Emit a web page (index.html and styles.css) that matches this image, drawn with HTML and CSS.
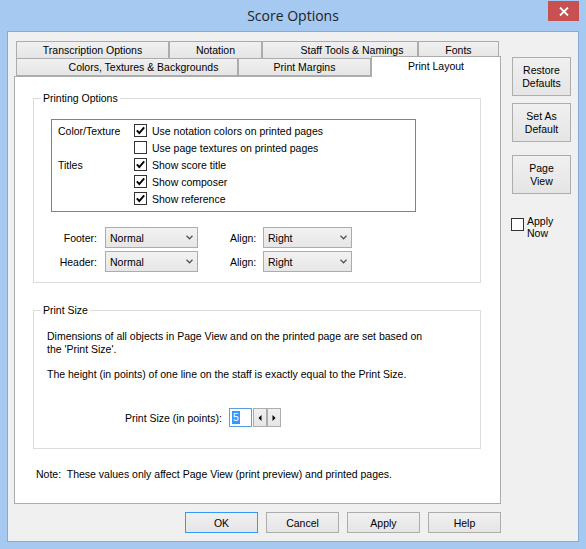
FILE: index.html
```html
<!DOCTYPE html>
<html lang="en">

<head>
    <meta charset="UTF-8">
    <title>Score Options</title>
    <link rel="stylesheet" href="styles.css">
</head>

<body>
    <div class="window">
        <div class="titlebar">
            <div class="title">Score Options</div>
            <div class="close">
                <svg width="10" height="9" viewBox="0 0 10 9">
                    <path d="M1 0.5 L9 8.5 M9 0.5 L1 8.5" stroke="#fff" stroke-width="1.8" fill="none" />
                </svg>
            </div>
        </div>

        <div class="client">
            <div class="main">
                <div class="tabs">
                    <div class="tab-row back">
                        <div class="tab" style="width:153px">Transcription Options</div>
                        <div class="tab" style="width:93px">Notation</div>
                        <div class="tab tab-shift" style="width:156px">Staff Tools &amp; Namings</div>
                        <div class="tab" style="width:81px">Fonts</div>
                    </div>
                    <div class="tab-row front">
                        <div class="tab tab-shift-wide" style="width:222px">Colors, Textures &amp; Backgrounds</div>
                        <div class="tab" style="width:133px">Print Margins</div>
                        <div class="tab selected" style="width:130px">Print Layout</div>
                    </div>
                </div>

                <div class="panel">
                    <fieldset class="group">
                        <legend>Printing Options</legend>
                        <div class="choices">
                            <div class="choice-label">Color/Texture</div>
                            <div class="check"><span class="box checked"><svg width="11" height="11" viewBox="0 0 11 11"><path d="M1.8 5.4 L4.3 8 L9.2 2.3" stroke="#000" stroke-width="1.9" fill="none" /></svg></span>Use notation colors on printed pages</div>
                            <div class="check col2"><span class="box"></span>Use page textures on printed pages</div>
                            <div class="choice-label">Titles</div>
                            <div class="check"><span class="box checked"><svg width="11" height="11" viewBox="0 0 11 11"><path d="M1.8 5.4 L4.3 8 L9.2 2.3" stroke="#000" stroke-width="1.9" fill="none" /></svg></span>Show score title</div>
                            <div class="check col2"><span class="box checked"><svg width="11" height="11" viewBox="0 0 11 11"><path d="M1.8 5.4 L4.3 8 L9.2 2.3" stroke="#000" stroke-width="1.9" fill="none" /></svg></span>Show composer</div>
                            <div class="check col2"><span class="box checked"><svg width="11" height="11" viewBox="0 0 11 11"><path d="M1.8 5.4 L4.3 8 L9.2 2.3" stroke="#000" stroke-width="1.9" fill="none" /></svg></span>Show reference</div>
                        </div>

                        <div class="fields">
                            <div class="field-row">
                                <div class="field-label">Footer:</div>
                                <div class="select wide">Normal<svg width="7" height="5" viewBox="0 0 7 5"><path d="M0.5 0.8 L3.5 3.8 L6.5 0.8" stroke="#555" stroke-width="1.3" fill="none" /></svg></div>
                                <div class="align-label">Align:</div>
                                <div class="select narrow">Right<svg width="7" height="5" viewBox="0 0 7 5"><path d="M0.5 0.8 L3.5 3.8 L6.5 0.8" stroke="#555" stroke-width="1.3" fill="none" /></svg></div>
                            </div>
                            <div class="field-row">
                                <div class="field-label">Header:</div>
                                <div class="select wide">Normal<svg width="7" height="5" viewBox="0 0 7 5"><path d="M0.5 0.8 L3.5 3.8 L6.5 0.8" stroke="#555" stroke-width="1.3" fill="none" /></svg></div>
                                <div class="align-label">Align:</div>
                                <div class="select narrow">Right<svg width="7" height="5" viewBox="0 0 7 5"><path d="M0.5 0.8 L3.5 3.8 L6.5 0.8" stroke="#555" stroke-width="1.3" fill="none" /></svg></div>
                            </div>
                        </div>
                    </fieldset>

                    <fieldset class="group size">
                        <legend>Print Size</legend>
                        <p class="info first">Dimensions of all objects in Page View and on the printed page are set based on<br>the 'Print Size'.</p>
                        <p class="info">The height (in points) of one line on the staff is exactly equal to the Print Size.</p>
                        <div class="size-row">
                            <div class="size-label">Print Size (in points):</div>
                            <div class="size-input"><span class="sel">5</span></div>
                            <div class="spin"><svg width="4" height="6" viewBox="0 0 4 6"><path d="M3.5 0 L0.5 3 L3.5 6 Z" fill="#000" /></svg></div>
                            <div class="spin"><svg width="4" height="6" viewBox="0 0 4 6"><path d="M0.5 0 L3.5 3 L0.5 6 Z" fill="#000" /></svg></div>
                        </div>
                    </fieldset>

                    <p class="note">Note:&nbsp; These values only affect Page View (print preview) and printed pages.</p>
                </div>

                <div class="actions">
                    <div class="button default">OK</div>
                    <div class="button">Cancel</div>
                    <div class="button">Apply</div>
                    <div class="button">Help</div>
                </div>
            </div>

            <div class="side">
                <div class="button tall">Restore<br>Defaults</div>
                <div class="button tall">Set As<br>Default</div>
                <div class="button tall gap">Page<br>View</div>
                <div class="apply-now">
                    <span class="box"></span>
                    <span>Apply<br>Now</span>
                </div>
            </div>
        </div>
    </div>
</body>

</html>
```

FILE: styles.css
```css
body {
    margin: 0;
    padding: 0;
    background-color: #a5c9f1;
    font-family: "Liberation Sans", Arial, sans-serif;
    font-size: 10.5px;
    color: #000;
}

.window {
    width: 586px;
    height: 549px;
    display: flex;
    flex-direction: column;
}

/* title bar */
.titlebar {
    height: 31px;
    display: grid;
    grid-template-columns: 1fr auto 1fr;
}

.title {
    grid-column: 2;
    font-family: "Open Sans", sans-serif;
    font-size: 14px;
    line-height: 31px;
    color: #222;
}

.close {
    grid-column: 3;
    justify-self: end;
    width: 31px;
    height: 20px;
    margin: 1px 7px 0 0;
    background: #c75050;
    display: flex;
    align-items: center;
    justify-content: center;
}

.client {
    flex: 1;
    margin: 0 7px 7px 7px;
    border: 1px solid #88a9d3;
    background: #f0f0f0;
    display: flex;
}

.main {
    width: 487px;
    margin-left: 6px;
    padding-top: 9px;
}

/* tabs */
.tabs {
    padding-left: 2px;
}

.tab-row {
    display: flex;
}

.tab {
    box-sizing: border-box;
    border: 1px solid #acacac;
    background: linear-gradient(#f0f0f0, #e5e5e5);
    text-align: center;
    white-space: nowrap;
}

.back .tab {
    height: 17px;
    line-height: 16px;
    border-bottom: none;
}

.front .tab {
    height: 18px;
    line-height: 17px;
}

.tab-shift {
    padding-left: 24px;
}

.tab-shift-wide {
    padding-left: 33px;
}

.front .tab.selected {
    position: relative;
    z-index: 1;
    height: 21px;
    margin-top: -2px;
    margin-bottom: -1px;
    line-height: 18px;
    border-bottom: none;
    background: #fff;
}

.panel {
    box-sizing: border-box;
    height: 428px;
    border: 1px solid #acacac;
    background: #fff;
    overflow: hidden;
}

/* group boxes */
.group {
    box-sizing: border-box;
    width: 448px;
    margin: 15px 0 0 18px;
    padding: 0;
    border: 1px solid #dcdcdc;
}

.group legend {
    margin-left: 7px;
    padding: 0 2px;
    line-height: 13px;
}

.group.size {
    margin-top: 21px;
    padding-bottom: 21px;
}

.choices {
    box-sizing: border-box;
    width: 365px;
    margin: 14px 0 0 17px;
    padding: 2px 0 4px;
    border: 1px solid #828282;
    display: grid;
    grid-template-columns: 82px auto;
    grid-auto-rows: 17px;
    align-items: center;
}

.choice-label {
    padding-left: 6px;
}

.check {
    display: flex;
    align-items: center;
    gap: 5px;
    white-space: nowrap;
}

.col2 {
    grid-column: 2;
}

.box {
    box-sizing: border-box;
    width: 13px;
    height: 13px;
    border: 1px solid #333;
    background: #fff;
    display: flex;
    align-items: center;
    justify-content: center;
    flex-shrink: 0;
}

.fields {
    margin-top: 15px;
    padding-bottom: 10px;
    display: flex;
    flex-direction: column;
    gap: 3px;
}

.field-row {
    display: flex;
    align-items: center;
    height: 21px;
}

.field-label {
    width: 63px;
    text-align: right;
}

.align-label {
    width: 26px;
    margin-left: 32px;
}

.select {
    box-sizing: border-box;
    height: 21px;
    padding: 0 4px 0 4px;
    border: 1px solid #acacac;
    background: linear-gradient(#f2f2f2, #e6e6e6);
    display: flex;
    align-items: center;
    justify-content: space-between;
}

.select.wide {
    width: 93px;
    margin-left: 8px;
}

.select.narrow {
    width: 89px;
    margin-left: 7px;
}

.info {
    margin: 12px 0 0 13px;
    line-height: 13px;
}

.info.first {
    margin-top: 13px;
}

.size-row {
    display: flex;
    align-items: center;
    height: 19px;
    margin-top: 27px;
}

.size-label {
    width: 94px;
    margin-left: 91px;
    white-space: nowrap;
}

.size-input {
    box-sizing: border-box;
    width: 23px;
    height: 19px;
    margin: 0 1px 0 10px;
    padding: 2px 0 2px 2px;
    border: 1px solid #569de5;
    display: flex;
}

.sel {
    background: #3399ff;
    color: #fff;
    padding: 0 1px;
    line-height: 13px;
}

.spin {
    box-sizing: border-box;
    width: 14px;
    height: 19px;
    border: 1px solid #acacac;
    background: linear-gradient(#f0f0f0, #e5e5e5);
    display: flex;
    align-items: center;
    justify-content: center;
}

.note {
    margin: 19px 0 0 21px;
    line-height: 13px;
}

/* buttons */
.actions {
    display: flex;
    justify-content: flex-end;
    gap: 8px;
    margin-top: 8px;
}

.button {
    box-sizing: border-box;
    width: 73px;
    height: 21px;
    border: 1px solid #adadad;
    background: linear-gradient(#f0f0f0, #e5e5e5);
    display: flex;
    align-items: center;
    justify-content: center;
    text-align: center;
}

.button.default {
    border-color: #3399ff;
}

.side {
    margin-left: 11px;
    padding-top: 25px;
}

.button.tall {
    width: 59px;
    height: 39px;
    line-height: 12.5px;
    margin-bottom: 7px;
}

.button.gap {
    margin-top: 13px;
}

.apply-now {
    display: flex;
    align-items: flex-start;
    gap: 3px;
    margin: 21px 0 0 -1px;
    line-height: 12px;
}

.apply-now .box {
    margin-top: 3px;
}
```
